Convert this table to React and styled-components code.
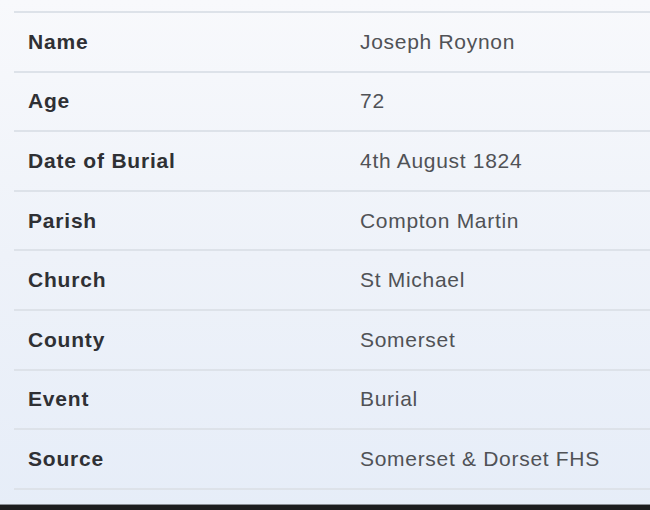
import styled, { createGlobalStyle } from "styled-components";

const GlobalStyle = createGlobalStyle`
  html, body {
    margin: 0;
    padding: 0;
    height: 100%;
  }
  #root {
    height: 100%;
  }
`;

const rows = [
  ["Name", "Joseph Roynon"],
  ["Age", "72"],
  ["Date of Burial", "4th August 1824"],
  ["Parish", "Compton Martin"],
  ["Church", "St Michael"],
  ["County", "Somerset"],
  ["Event", "Burial"],
  ["Source", "Somerset & Dorset FHS"],
];

const Page = styled.div`
  display: flex;
  flex-direction: column;
  height: 100%;
  background: linear-gradient(180deg, #f8f9fc 0%, #eef2f9 50%, #e6edf8 100%);
  font-family: "Liberation Sans", Arial, sans-serif;
`;

const Content = styled.div`
  flex: 1;
  padding: 11px 0 0 14px;
`;

const Table = styled.div`
  display: flex;
  flex-direction: column;
  border-bottom: 2px solid #dde2e9;
`;

const Row = styled.div`
  display: grid;
  grid-template-columns: 332px 1fr;
  align-items: center;
  height: 57.6px;
  padding-left: 14px;
  border-top: 2px solid #dde2e9;
`;

const Label = styled.div`
  font-size: 21px;
  font-weight: bold;
  letter-spacing: 0.8px;
  color: #2f3034;
`;

const Value = styled.div`
  font-size: 21px;
  letter-spacing: 0.7px;
  color: #505256;
`;

const Footer = styled.div`
  height: 5px;
  background: #1d1d1f;
  border-top: 1px solid #8a8e94;
`;

export default function App() {
  return (
    <>
      <GlobalStyle />
      <Page>
        <Content>
          <Table>
            {rows.map(([label, value]) => (
              <Row key={label}>
                <Label>{label}</Label>
                <Value>{value}</Value>
              </Row>
            ))}
          </Table>
        </Content>
        <Footer />
      </Page>
    </>
  );
}
